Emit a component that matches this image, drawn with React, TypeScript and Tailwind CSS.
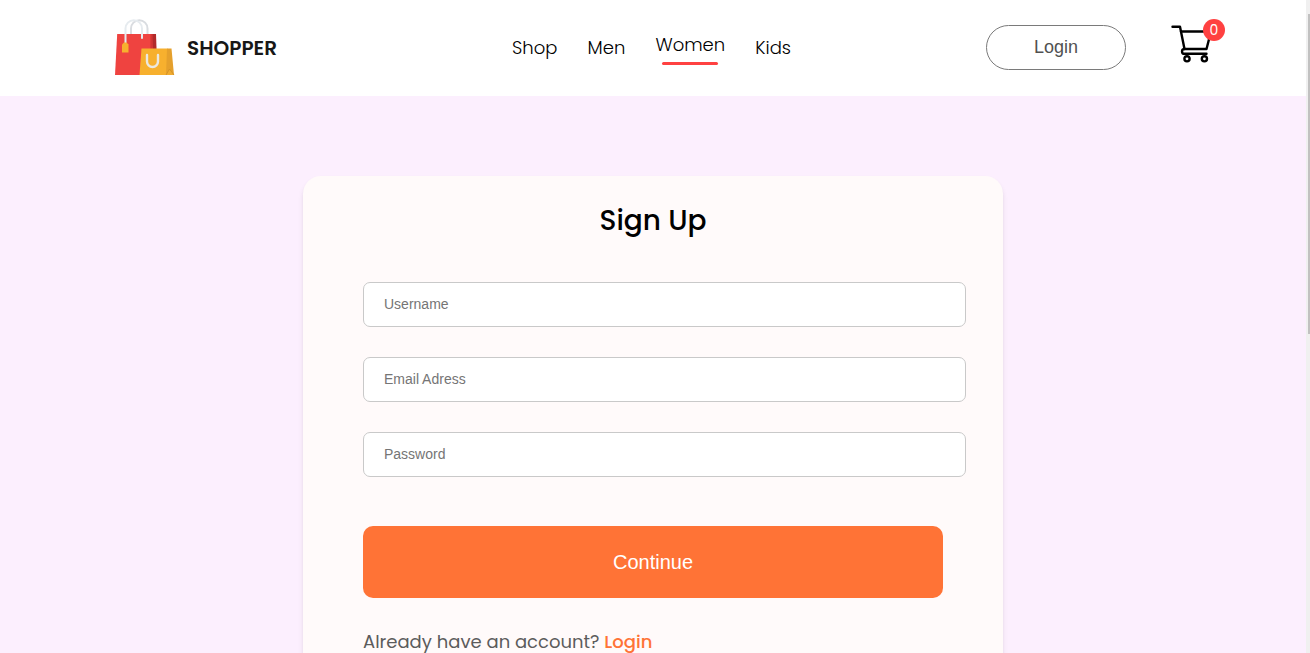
const navItems = [
  { label: 'Shop', active: false },
  { label: 'Men', active: false },
  { label: 'Women', active: true },
  { label: 'Kids', active: false },
];

const fields = [
  { id: 'username', type: 'text', label: 'Username' },
  { id: 'email', type: 'email', label: 'Email Adress' },
  { id: 'password', type: 'password', label: 'Password' },
];

function BagsLogo() {
  return (
    <svg width="60" height="58" viewBox="0 0 60 58" fill="none" aria-hidden="true">
      <path d="M16 18v-7.500a8.200 8.200 0 0 1 16.500 0V18" stroke="#d9dce0" strokeWidth="2" />
      <path d="M2.200 16H39l1.500 41H0z" fill="#ef4340" />
      <path d="M35.500 16h2.300l2.200 41h-5z" fill="#d23533" />
      <path d="M37.500 16H41l1.500 41H39z" fill="#b22a2a" />
      <path d="M10.500 26V10.500a8.200 8.200 0 0 1 16.500 0V20" stroke="#e6ebef" strokeWidth="2" strokeLinecap="round" />
      <path d="M7 26.500l2-2h2.500l2 2v8H7z" fill="#f7b02e" />
      <path d="M26.500 30.500H52.500V57H24.500z" fill="#f7b02e" />
      <path d="M52 30.500h4.500L59 57h-8z" fill="#e5a02c" />
      <path d="M54.500 51l4.500 6h-8z" fill="#f0ab30" />
      <path d="M51 57l3.500-6L59 57" stroke="#cf8f26" strokeWidth="0.800" />
      <path d="M32 37v6.500a5.500 5.500 0 0 0 11 0V37" stroke="#ece8df" strokeWidth="2.400" strokeLinecap="round" />
    </svg>
  );
}

function CartIcon() {
  return (
    <svg
      width="42"
      height="40"
      viewBox="0 0 42 40"
      fill="none"
      stroke="#000"
      strokeWidth="2.400"
      strokeLinecap="round"
      strokeLinejoin="round"
      aria-hidden="true"
    >
      <path d="M2.500 2.700H10L14.500 25" />
      <path d="M11 7.500h30L36.500 25H14.500c-3.300 0-3.300 4.800 0 4.800h22" />
      <circle cx="17" cy="34.800" r="2.600" />
      <circle cx="34.400" cy="34.800" r="2.600" />
    </svg>
  );
}

function Header() {
  return (
    <header className="flex h-24 shrink-0 items-center justify-between bg-white pr-[94px] pb-[2px] pl-[115px]">
      <a href="#" className="flex items-center gap-3">
        <BagsLogo />
        <span className="w-[90px] pt-[2px] text-xl font-semibold text-[#171717]">SHOPPER</span>
      </a>
      <nav className="pt-px pl-10">
        <ul className="flex w-[279px] items-center justify-between text-lg font-light text-black">
          {navItems.map((item) => (
            <li key={item.label} className="flex flex-col items-center gap-[3px]">
              <a href="#">{item.label}</a>
              {item.active && <span className="h-[3px] w-[80%] rounded-full bg-[#ff4141]" />}
            </li>
          ))}
        </ul>
      </nav>
      <div className="flex items-center gap-[44px]">
        <button
          type="button"
          className="h-[45px] w-[140px] rounded-full border border-[#7a7a7a] bg-white font-['Liberation_Sans',Arial,sans-serif] text-lg text-[#515151]"
        >
          Login
        </button>
        <a href="#" aria-label="Cart" className="relative -mt-1.5">
          <CartIcon />
          <span className="absolute -top-[5px] -right-[13px] flex size-[22px] items-center justify-center rounded-full bg-[#ff4141] text-sm text-white">
            0
          </span>
        </a>
      </div>
    </header>
  );
}

function SignUp() {
  return (
    <main className="grow bg-[#fceffe] py-20">
      <form className="mx-auto w-[700px] max-w-full rounded-[18px] bg-[#fffafa] px-[60px] pt-[21px] pb-12 shadow-md">
        <h1 className="text-center text-[28px] leading-[48px] font-medium text-black">Sign Up</h1>
        <div className="-mr-[23px] mt-[37px] flex flex-col gap-[30px]">
          {fields.map((field) => (
            <input
              key={field.id}
              id={field.id}
              name={field.id}
              type={field.type}
              aria-label={field.label}
              placeholder={field.label}
              className="h-[45px] w-full rounded-[7px] border border-[#c9c9c9] bg-white px-5 pb-[2px] font-['Liberation_Sans',Arial,sans-serif] text-sm outline-none placeholder:text-[#757575]"
            />
          ))}
        </div>
        <button
          type="button"
          className="mt-[49px] h-[72px] w-full rounded-[10px] bg-[#ff7336] font-['Liberation_Sans',Arial,sans-serif] text-xl text-white"
        >
          Continue
        </button>
        <p className="mt-[30px] text-lg text-[#5c5c5c]">
          Already have an account?{' '}
          <a href="#" className="font-medium text-[#ff7336]">
            Login
          </a>
        </p>
      </form>
    </main>
  );
}

export default function App() {
  return (
    <div className="flex h-screen font-[Poppins,Inter,sans-serif]">
      <div className="flex min-w-0 grow flex-col overflow-y-auto [scrollbar-width:none]">
        <Header />
        <SignUp />
      </div>
      <div className="flex w-1 shrink-0 justify-end bg-[#f0f0f0] pt-[14px]" aria-hidden="true">
        <div className="h-[50%] w-0.5 bg-[#c1c1c1]" />
      </div>
    </div>
  );
}
